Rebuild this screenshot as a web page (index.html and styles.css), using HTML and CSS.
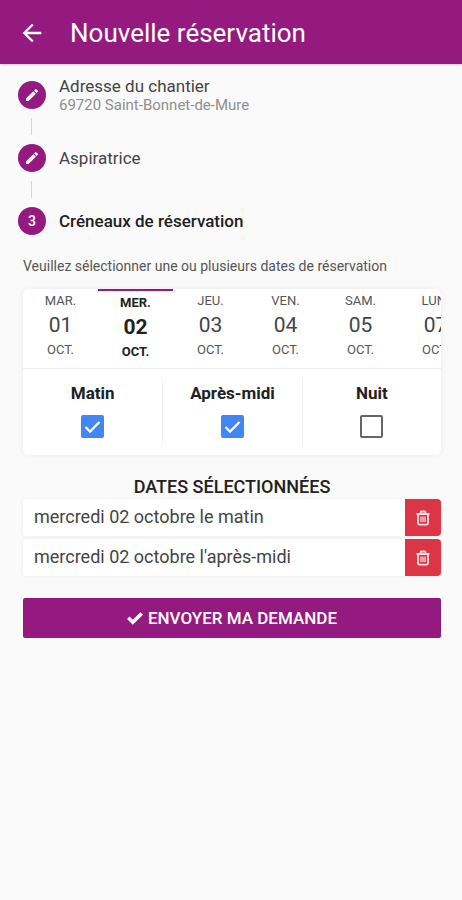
FILE: index.html
```html
<!DOCTYPE html>
<html lang="fr">
  <head>
    <meta charset="UTF-8">
    <meta name="viewport" content="width=device-width, initial-scale=1.0">
    <title>Nouvelle réservation</title>
    <link rel="stylesheet" href="styles.css">
  </head>
  <body>
    <header class="topbar">
      <button class="back-btn" type="button" aria-label="Retour">
        <svg width="28" height="28" viewBox="0 0 24 24" fill="currentColor"><path d="M20 11H7.83l5.59-5.59L12 4l-8 8 8 8 1.41-1.41L7.83 13H20z"/></svg>
      </button>
      <h1>Nouvelle réservation</h1>
    </header>

    <main>
      <ol class="stepper">
        <li class="step">
          <span class="step-icon">
            <svg width="16" height="16" viewBox="0 0 24 24" fill="currentColor"><path d="M3 17.25V21h3.75L17.81 9.94l-3.75-3.75zM20.71 7.04a1 1 0 0 0 0-1.41l-2.34-2.34a1 1 0 0 0-1.41 0l-1.83 1.83 3.75 3.75z"/></svg>
          </span>
          <div class="step-label">
            Adresse du chantier
            <small>69720 Saint-Bonnet-de-Mure</small>
          </div>
        </li>
        <li class="step">
          <span class="step-icon">
            <svg width="16" height="16" viewBox="0 0 24 24" fill="currentColor"><path d="M3 17.25V21h3.75L17.81 9.94l-3.75-3.75zM20.71 7.04a1 1 0 0 0 0-1.41l-2.34-2.34a1 1 0 0 0-1.41 0l-1.83 1.83 3.75 3.75z"/></svg>
          </span>
          <div class="step-label">Aspiratrice</div>
        </li>
        <li class="step active">
          <span class="step-icon">3</span>
          <div class="step-label">Créneaux de réservation</div>
        </li>
      </ol>

      <form class="booking">
        <p class="hint">Veuillez sélectionner une ou plusieurs dates de réservation</p>

        <div class="card">
          <div class="days">
            <button class="day" type="button">MAR.<span class="day-num">01</span>OCT.</button>
            <button class="day selected" type="button">MER.<span class="day-num">02</span>OCT.</button>
            <button class="day" type="button">JEU.<span class="day-num">03</span>OCT.</button>
            <button class="day" type="button">VEN.<span class="day-num">04</span>OCT.</button>
            <button class="day" type="button">SAM.<span class="day-num">05</span>OCT.</button>
            <button class="day" type="button">LUN.<span class="day-num">07</span>OCT.</button>
          </div>
          <div class="slots">
            <div class="slot">
              <label for="matin">Matin</label>
              <input type="checkbox" id="matin" checked>
            </div>
            <div class="slot">
              <label for="apresmidi">Après-midi</label>
              <input type="checkbox" id="apresmidi" checked>
            </div>
            <div class="slot">
              <label for="nuit">Nuit</label>
              <input type="checkbox" id="nuit">
            </div>
          </div>
        </div>

        <h2>DATES SÉLECTIONNÉES</h2>
        <ul class="dates">
          <li>
            <span>mercredi 02 octobre le matin</span>
            <button class="delete-btn" type="button" aria-label="Supprimer">
              <svg width="16" height="16" viewBox="0 0 16 16" fill="none" stroke="currentColor" stroke-width="1.8"><path d="M1.5 4h13M5.5 4V2.4c0-.6.3-.9.9-.9h3.2c.6 0 .9.3.9.9V4M3 4v9c0 1 .5 1.6 1.5 1.6h7c1 0 1.5-.6 1.5-1.6V4"/><path d="M6 6.500v5.500M8 6.500v5.500M10 6.500v5.500" stroke-width="1.2"/></svg>
            </button>
          </li>
          <li>
            <span>mercredi 02 octobre l'après-midi</span>
            <button class="delete-btn" type="button" aria-label="Supprimer">
              <svg width="16" height="16" viewBox="0 0 16 16" fill="none" stroke="currentColor" stroke-width="1.8"><path d="M1.5 4h13M5.5 4V2.4c0-.6.3-.9.9-.9h3.2c.6 0 .9.3.9.9V4M3 4v9c0 1 .5 1.6 1.5 1.6h7c1 0 1.5-.6 1.5-1.6V4"/><path d="M6 6.500v5.500M8 6.500v5.500M10 6.500v5.500" stroke-width="1.2"/></svg>
            </button>
          </li>
        </ul>

        <button class="submit-btn" type="submit">
          <svg width="16" height="16" viewBox="0 0 16 16" fill="none" stroke="currentColor" stroke-width="3.6"><path d="M1.3 7.8l4.500 4.500L14.700 3.500"/></svg>
          ENVOYER MA DEMANDE
        </button>
      </form>
    </main>
  </body>
</html>
```
FILE: styles.css
```css
* { box-sizing: border-box; margin: 0; padding: 0; }
:root {
  --primary: #951a80;
  --danger: #dc3545;
  --check: #4285f4;
  --text: #212121;
}
body {
  font-family: Roboto, "Liberation Sans", sans-serif;
  font-size: 17px;
  line-height: 20px;
  background: #fafafa;
  color: var(--text);
}
button {
  font: inherit;
  color: inherit;
  border: none;
  background: none;
  cursor: pointer;
}
.topbar {
  display: flex;
  align-items: center;
  gap: 24px;
  height: 64px;
  padding: 2px 18px 0;
  background: var(--primary);
  color: #fff;
  box-shadow: 0 1px 2px rgba(0, 0, 0, 0.2);
}
.back-btn {
  display: flex;
}
h1 {
  font-size: 26px;
  line-height: 32px;
  font-weight: 400;
}

.stepper {
  list-style: none;
  padding: 17px 18px 0;
}
.step {
  display: flex;
  align-items: center;
  gap: 13px;
  height: 28px;
}
.step + .step {
  margin-top: 35px;
}
.step:not(:last-child) .step-icon::after {
  content: "";
  position: absolute;
  top: 37px;
  left: 13px;
  width: 1px;
  height: 17px;
  background: #d5d5d5;
}
.step-icon {
  position: relative;
  display: flex;
  align-items: center;
  justify-content: center;
  width: 28px;
  height: 28px;
  border-radius: 50%;
  background: var(--primary);
  color: #fff;
  font-size: 14px;
}
.step-label {
  color: #444;
}
.step-label small {
  display: block;
  font-size: 15px;
  line-height: 18px;
  color: #8f8f8f;
}
.step.active {
  font-weight: 500;
}
.step.active .step-label {
  color: var(--text);
}

.booking {
  padding: 21px 21px 20px 23px;
}
.hint {
  font-size: 14px;
  color: #555;
}
.card {
  margin-top: 13px;
  border-radius: 6px;
  background: #fff;
  box-shadow: 0 0 5px rgba(0, 0, 0, 0.07);
}
.days {
  display: flex;
  overflow: hidden;
  border-bottom: 1px solid #eee;
}
.day {
  flex: 0 0 75px;
  height: 79px;
  padding-bottom: 6px;
  font-size: 13px;
  color: #555;
}
.day-num {
  display: block;
  font-size: 21px;
  line-height: 29px;
  color: #444;
}
.day.selected {
  padding-bottom: 4px;
  border-top: 2px solid var(--primary);
  font-weight: 700;
  color: var(--text);
}
.day.selected .day-num {
  color: var(--text);
}
.slots {
  display: grid;
  grid-template-columns: repeat(3, 1fr);
  padding: 10px 0;
}
.slot {
  display: flex;
  flex-direction: column;
  align-items: center;
  gap: 12px;
  height: 66px;
  padding-top: 4px;
}
.slot + .slot {
  border-left: 1px solid #f0f0f0;
}
.slot label {
  font-weight: 700;
}
.slot input {
  appearance: none;
  width: 23px;
  height: 23px;
  border: 2px solid #666;
  border-radius: 2px;
  background: #fff;
}
.slot input:checked {
  border-color: var(--check);
  background: var(--check) url("data:image/svg+xml,%3Csvg xmlns='http://www.w3.org/2000/svg' viewBox='0 0 19 19'%3E%3Cpath d='M2.500 10l4.500 4.500L16.500 5' fill='none' stroke='white' stroke-width='2.300'/%3E%3C/svg%3E") center / contain no-repeat;
}

h2 {
  margin-top: 22px;
  font-size: 18px;
  font-weight: 500;
  text-align: center;
}
.dates {
  list-style: none;
  display: flex;
  flex-direction: column;
  gap: 3px;
  margin-top: 2px;
}
.dates li {
  display: flex;
  justify-content: space-between;
  height: 37px;
  border-radius: 4px;
  background: #fff;
  box-shadow: 0 0 4px rgba(0, 0, 0, 0.06);
  font-size: 18px;
  color: #444;
}
.dates span {
  padding: 8px 11px;
}
.delete-btn {
  display: flex;
  align-items: center;
  justify-content: center;
  width: 36px;
  border-radius: 0 4px 4px 0;
  background: var(--danger);
  color: #ffdfe3;
}
.submit-btn {
  display: flex;
  align-items: center;
  justify-content: center;
  gap: 5px;
  width: 100%;
  height: 40px;
  margin-top: 22px;
  border-radius: 2px;
  background: var(--primary);
  color: #fff;
  font-weight: 500;
}
```
